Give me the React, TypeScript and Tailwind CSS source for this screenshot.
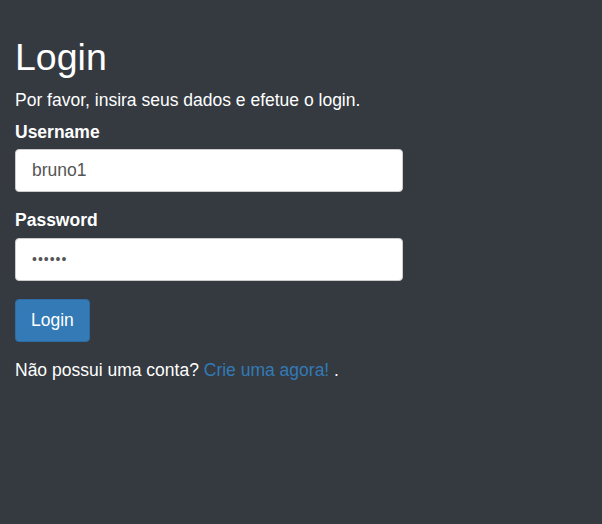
import React from 'react'

const App = () => {
  return (
    <div className="min-h-[524px] w-full bg-[#343a40] px-[15px] pt-[37px] font-['Liberation_Sans',Arial,sans-serif] text-white">
      <h1 className="mb-[10px] text-[37.5px] leading-[1.1]">Login</h1>
      <p className="mb-[7px] text-[17.5px] leading-[1.4]">Por favor, insira seus dados e efetue o login.</p>
      <form className="w-[388px]" onSubmit={(e) => e.preventDefault()}>
        <div className="mb-[16px]">
          <label className="mb-[5px] block text-[17.5px] font-bold leading-[1.4]">Username</label>
          <input
            type="text"
            defaultValue="bruno1"
            className="h-[43px] w-full rounded-[4px] border border-[#ccc] bg-white px-[16px] text-[17.5px] text-[#555] outline-none"
          />
        </div>
        <div className="mb-[18px]">
          <label className="mb-[5px] block text-[17.5px] font-bold leading-[1.4]">Password</label>
          <input
            type="password"
            defaultValue="123456"
            className="h-[43px] w-full rounded-[4px] border border-[#ccc] bg-white px-[16px] text-[14px] tracking-[1px] text-[#555] outline-none"
          />
        </div>
        <button
          type="submit"
          className="h-[43px] rounded-[4px] border border-[#2e6da4] bg-[#337ab7] px-[15px] text-[17.5px] text-white"
        >
          Login
        </button>
      </form>
      <p className="mt-[16px] text-[17.5px] leading-[1.4]">
        Não possui uma conta?{' '}
        <a href="#" className="text-[#337ab7]">
          Crie uma agora!
        </a>{' '}
        .
      </p>
    </div>
  )
}

export default App
